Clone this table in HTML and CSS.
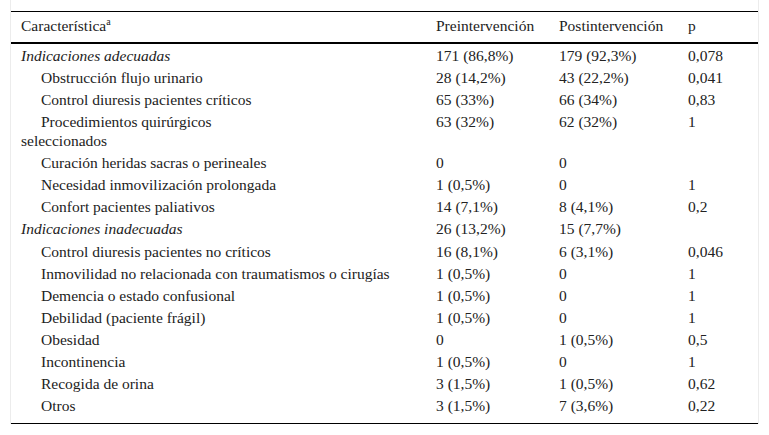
FILE: index.html
```html
<!DOCTYPE html>
<html lang="es">
<head>
<meta charset="utf-8">
<title>Tabla</title>
<link rel="stylesheet" href="styles.css">
</head>
<body>
<div class="frame">
<table class="data">
<colgroup>
<col class="c1"><col class="c2"><col class="c3"><col class="c4">
</colgroup>
<thead>
<tr><th>Característica<sup>a</sup></th><th>Preintervención</th><th>Postintervención</th><th>p</th></tr>
</thead>
<tbody>
<tr><td class="group">Indicaciones adecuadas</td><td>171 (86,8%)</td><td>179 (92,3%)</td><td>0,078</td></tr>
<tr><td class="sub">Obstrucción flujo urinario</td><td>28 (14,2%)</td><td>43 (22,2%)</td><td>0,041</td></tr>
<tr><td class="sub">Control diuresis pacientes críticos</td><td>65 (33%)</td><td>66 (34%)</td><td>0,83</td></tr>
<tr><td class="sub">Procedimientos quirúrgicos<br>seleccionados</td><td>63 (32%)</td><td>62 (32%)</td><td>1</td></tr>
<tr><td class="sub">Curación heridas sacras o perineales</td><td>0</td><td>0</td><td></td></tr>
<tr><td class="sub">Necesidad inmovilización prolongada</td><td>1 (0,5%)</td><td>0</td><td>1</td></tr>
<tr><td class="sub">Confort pacientes paliativos</td><td>14 (7,1%)</td><td>8 (4,1%)</td><td>0,2</td></tr>
<tr><td class="group">Indicaciones inadecuadas</td><td>26 (13,2%)</td><td>15 (7,7%)</td><td></td></tr>
<tr><td class="sub">Control diuresis pacientes no críticos</td><td>16 (8,1%)</td><td>6 (3,1%)</td><td>0,046</td></tr>
<tr><td class="sub">Inmovilidad no relacionada con traumatismos o cirugías</td><td>1 (0,5%)</td><td>0</td><td>1</td></tr>
<tr><td class="sub">Demencia o estado confusional</td><td>1 (0,5%)</td><td>0</td><td>1</td></tr>
<tr><td class="sub">Debilidad (paciente frágil)</td><td>1 (0,5%)</td><td>0</td><td>1</td></tr>
<tr><td class="sub">Obesidad</td><td>0</td><td>1 (0,5%)</td><td>0,5</td></tr>
<tr><td class="sub">Incontinencia</td><td>1 (0,5%)</td><td>0</td><td>1</td></tr>
<tr><td class="sub">Recogida de orina</td><td>3 (1,5%)</td><td>1 (0,5%)</td><td>0,62</td></tr>
<tr class="last"><td class="sub">Otros</td><td>3 (1,5%)</td><td>7 (3,6%)</td><td>0,22</td></tr>
</tbody>
</table>
</div>
</body>
</html>
```
FILE: styles.css
```css
html, body {
  margin: 0;
  padding: 0;
  background: #ffffff;
}
body {
  font-family: "Liberation Serif", "Times New Roman", serif;
  font-size: 15.5px;
  color: #222222;
}
.frame {
  margin-left: 10px;
  width: 747px;
  padding-top: 11px;
  border-left: 1px solid #ececec;
  border-right: 1px solid #ececec;
}
.data {
  border-collapse: collapse;
  width: 747px;
  table-layout: fixed;
}
.c1 { width: 415px; }
.c2 { width: 123px; }
.c3 { width: 129px; }
.c4 { width: 80px; }
.data th {
  font-weight: normal;
  text-align: left;
  padding: 3.2px 10px 5.05px;
  line-height: 22px;
  border-top: 1px solid #000;
  border-bottom: 2px solid #000;
  white-space: nowrap;
}
.data th sup {
  font-size: 10px;
  line-height: 0;
}
.data td {
  padding: 1.4px 10px;
  line-height: 19.3px;
  vertical-align: top;
  text-align: left;
  white-space: nowrap;
}
.data td.group {
  font-style: italic;
}
.data td.sub {
  text-indent: 20px;
}
.data tr.last td {
  padding-bottom: 7.25px;
  border-bottom: 1px solid #000;
}
```
